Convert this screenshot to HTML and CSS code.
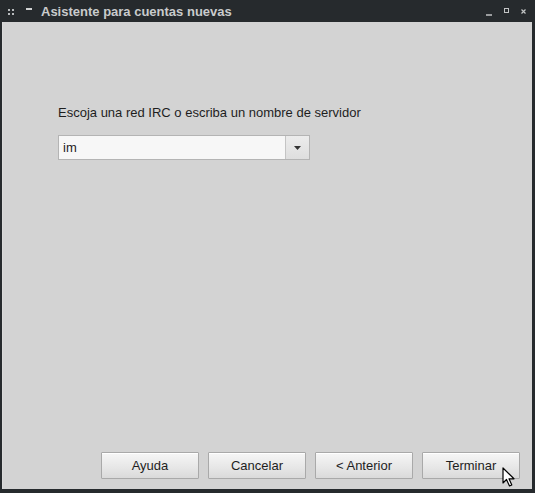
FILE: index.html
```html
<!DOCTYPE html>
<html lang="es">
<head>
    <meta charset="UTF-8">
    <title>Asistente para cuentas nuevas</title>
    <link rel="stylesheet" href="styles.css">
</head>
<body>
    <div class="window">
        <!-- Barra de título -->
        <div class="titlebar">
            <div class="title-left">
                <svg class="menu-dots" width="6" height="6" viewBox="0 0 6 6"><rect x="0" y="0" width="2" height="2"/><rect x="4" y="0" width="2" height="2"/><rect x="0" y="4" width="2" height="2"/><rect x="4" y="4" width="2" height="2"/></svg>
                <svg class="shade" width="6" height="2" viewBox="0 0 6 2"><rect x="0" y="0" width="6" height="2"/></svg>
                <span class="title">Asistente para cuentas nuevas</span>
            </div>
            <div class="title-buttons">
                <svg width="6" height="2" viewBox="0 0 6 2" class="btn-min"><rect x="0" y="0" width="6" height="2"/></svg>
                <svg width="5" height="5" viewBox="0 0 5 5" class="btn-max"><rect x="0.5" y="0.5" width="4" height="4" fill="none" stroke="currentColor"/></svg>
                <svg width="5" height="5" viewBox="0 0 5 5" class="btn-close"><path d="M0.5 0.5 L4.5 4.5 M4.5 0.5 L0.5 4.5" stroke="currentColor" stroke-width="1.2"/></svg>
            </div>
        </div>

        <!-- Contenido -->
        <div class="client">
            <div class="page">
                <p class="label">Escoja una red IRC o escriba un nombre de servidor</p>
                <div class="combo">
                    <div class="combo-entry">im</div>
                    <div class="combo-button">
                        <svg width="7" height="4" viewBox="0 0 7 4"><polygon points="0,0 7,0 3.5,4"/></svg>
                    </div>
                </div>
            </div>

            <div class="actions">
                <button class="btn">Ayuda</button>
                <button class="btn">Cancelar</button>
                <button class="btn">&lt; Anterior</button>
                <button class="btn">Terminar</button>
            </div>
        </div>

        <!-- Puntero del ratón -->
        <svg class="cursor" width="14" height="21" viewBox="0 0 14 21">
            <path d="M1 1 L1 16 L4.5 12.5 L7.5 19 L9.8 18 L7 11.8 L12 11.8 Z" fill="#fff" stroke="#000" stroke-width="1.2" stroke-linejoin="round"/>
        </svg>
    </div>
</body>
</html>
```

FILE: styles.css
```css
/* --- Ventana --- */
:root {
    --frame: #262a2d;
    --title-text: #c9cbcc;
    --client-bg: #d3d3d3;
    --text: #1e1e1e;
    --border: #a9a9a9;
}
* { margin: 0; padding: 0; box-sizing: border-box; }
body {
    background-color: var(--frame);
    font-family: 'Liberation Sans', Arial, sans-serif;
    width: 535px;
    height: 493px;
    overflow: hidden;
}
.window {
    position: relative;
    width: 535px;
    height: 493px;
    display: flex;
    flex-direction: column;
}

/* --- Barra de título --- */
.titlebar {
    height: 22px;
    display: flex;
    align-items: center;
    justify-content: space-between;
    color: var(--title-text);
}
.title-left { display: flex; align-items: center; padding-left: 8px; }
.menu-dots { fill: #b8bbbd; margin-top: 1px; }
.shade { fill: #d0d2d3; margin-left: 12px; margin-top: -5px; }
.title {
    margin-left: 9px;
    font-weight: 700;
    font-size: 13px;
    color: var(--title-text);
}
.title-buttons { display: flex; align-items: center; gap: 12px; padding-right: 9px; color: #c2c4c5; }
.btn-min { fill: #9a9c9e; margin-top: 8px; }
.btn-max { margin-top: -1px; }

/* --- Área cliente --- */
.client {
    height: 467px;
    margin: 0 3px 0 2px;
    background-color: var(--client-bg);
    border-left: 1px solid #dadada;
    display: flex;
    flex-direction: column;
    justify-content: space-between;
}
.page { padding: 83px 0 0 55px; }
.label {
    font-size: 13px;
    color: var(--text);
    line-height: 16px;
}

/* --- Combo --- */
.combo {
    margin-top: 14px;
    width: 252px;
    height: 25px;
    display: flex;
    border: 1px solid #b4b4b4;
    background-color: #f7f7f7;
}
.combo-entry {
    flex: 1;
    font-size: 13px;
    line-height: 23px;
    padding-left: 4px;
    color: var(--text);
    border-right: 1px solid #c4c4c4;
}
.combo-button {
    width: 23px;
    display: flex;
    align-items: center;
    justify-content: center;
    background: linear-gradient(#ececec, #dedede);
}
.combo-button svg { fill: #333; margin-top: 1px; }

/* --- Botones --- */
.actions {
    display: flex;
    justify-content: flex-end;
    gap: 9px;
    padding: 0 12px 10px 0;
}
.btn {
    width: 98px;
    height: 27px;
    font-family: 'Liberation Sans', Arial, sans-serif;
    font-size: 13px;
    color: var(--text);
    border: 1px solid var(--border);
    border-radius: 1px;
    background: linear-gradient(#f6f6f6, #e6e6e6 60%, #dadada);
    box-shadow: inset 0 1px 0 #fff;
}

/* --- Cursor --- */
.cursor { position: absolute; left: 502px; top: 467px; }
```
